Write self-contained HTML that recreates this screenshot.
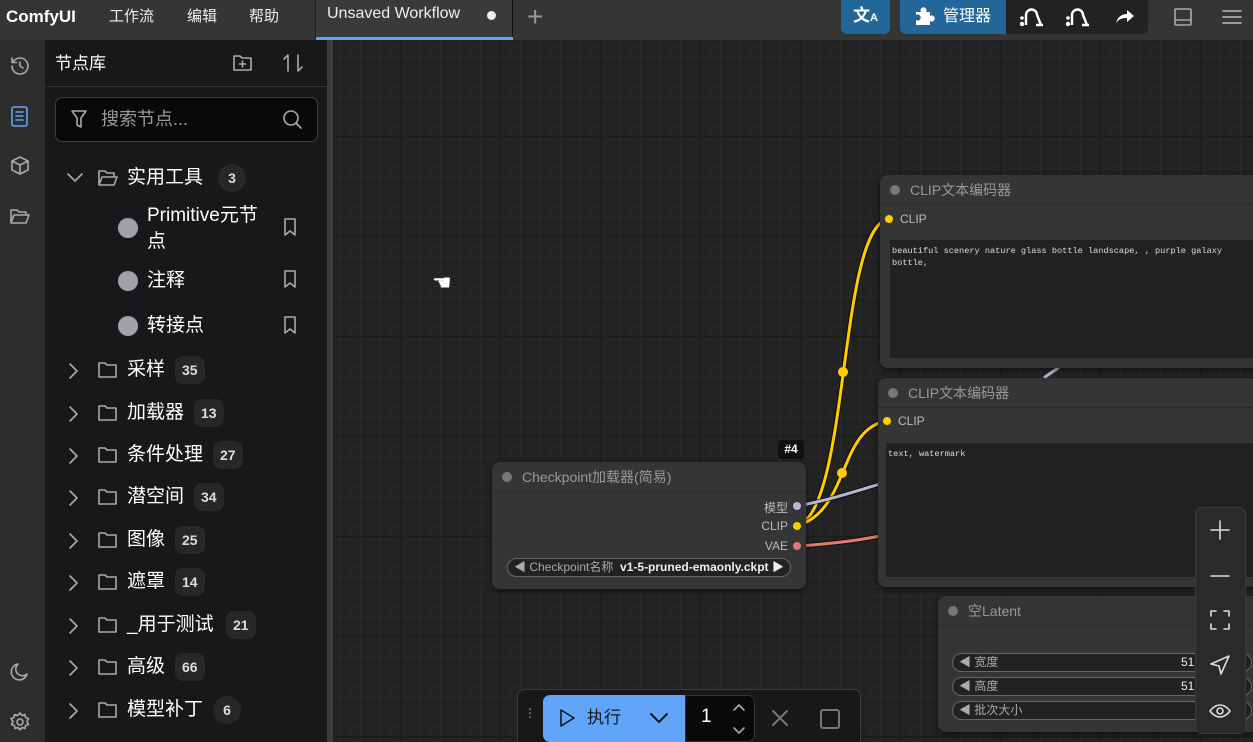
<!DOCTYPE html>
<html><head><meta charset="utf-8"><style>
*{box-sizing:border-box;margin:0;padding:0}
html,body{width:1253px;height:742px;overflow:hidden}
body{background:#222;font-family:"Liberation Sans","Noto Sans CJK SC",sans-serif;position:relative;color:#ddd}
.abs{position:absolute}
#top{left:0;top:0;width:1253px;height:40px;background:#353535}
#canvas{left:333px;top:40px;width:920px;height:702px;background-color:#222;
background-image:linear-gradient(#1b1b1b 1px,transparent 1px),linear-gradient(90deg,#1b1b1b 1px,transparent 1px),linear-gradient(#282828 1px,transparent 1px),linear-gradient(90deg,#282828 1px,transparent 1px);
background-size:100px 100px,100px 100px,10px 10px,10px 10px;background-position:-33px -4px}
#rail{left:0;top:40px;width:45px;height:702px;background:#2d2d2d}
#side{left:45px;top:40px;width:282px;height:702px;background:#18181b}
#gap{left:327px;top:40px;width:6px;height:702px;background:#3a3a3a}
.menu{top:7px;font-size:15px;color:#eee;line-height:20px}
.badge{position:absolute;top:0;height:28px;min-width:28px;padding:0 7px;border-radius:8px;background:#27272a;color:#ddd;font-size:14px;font-weight:bold;line-height:28px;text-align:center}
.node{position:absolute;background:#353535;border-radius:8px;box-shadow:0 2px 6px #0008}
.nt{height:30px;border-bottom:1px solid #2b2b2b;font-size:14px;color:#999;line-height:30px;padding-left:30px;position:relative}
.nt:before{content:"";position:absolute;left:10px;top:10px;width:10px;height:10px;border-radius:50%;background:#777}
.ta{position:absolute;background:#222;font-family:"Liberation Mono",monospace;font-size:8.6px;color:#ddd;padding:5px 2px;line-height:12px;white-space:nowrap;overflow:hidden}
.w{position:absolute;height:19px;border:1px solid #666;border-radius:10px;background:#222;font-size:12px;color:#aaa;line-height:17px;padding-left:6px}
.ic{position:absolute;stroke:#aaa;fill:none;stroke-width:1.6;stroke-linecap:round;stroke-linejoin:round}
.tx{position:absolute;font-size:19px;color:#fff;line-height:24px}
</style></head><body>
<div id="canvas" class="abs"></div>
<div id="top" class="abs"></div>
<div class="abs" style="left:6px;top:7px;font-size:17px;font-weight:bold;color:#fff">ComfyUI</div>
<div class="abs menu" style="left:109px">工作流</div>
<div class="abs menu" style="left:187px">编辑</div>
<div class="abs menu" style="left:249px">帮助</div>
<div class="abs" style="left:315px;top:0;width:1px;height:40px;background:#222"></div>
<div class="abs" style="left:316px;top:0;width:197px;height:40px;background:#3a3a3a;border-right:1px solid #111"></div>
<div class="abs" style="left:316px;top:37px;width:197px;height:3px;background:#60a5fa"></div>
<div class="abs" style="left:327px;top:5px;font-size:16px;color:#eee">Unsaved Workflow</div>
<div class="abs" style="left:487px;top:11px;width:9px;height:9px;border-radius:50%;background:#eee"></div>
<div class="abs" style="left:527px;top:1px;font-size:28px;color:#999;font-weight:300">+</div>
<div class="abs" style="left:841px;top:0;width:49px;height:34px;background:#236698;border-radius:0 0 6px 6px;color:#fff;font-size:17px;font-weight:bold;text-align:center;line-height:32px">文<span style="font-size:11px">A</span></div>
<div class="abs" style="left:900px;top:0;width:248px;height:34px;background:#222;border-radius:0 0 6px 6px"></div>
<div class="abs" style="left:900px;top:0;width:106px;height:34px;background:#236698;border-radius:0 0 0 6px"></div>
<svg class="abs" style="left:913px;top:6px" width="22" height="20" viewBox="0 0 22 20"><path d="M3 6h5a3 3 0 1 1 5 0h4v4a3 3 0 1 1 0 5v4H3v-5a3 3 0 1 0 0-5z" fill="#fff"/></svg>
<div class="abs" style="left:943px;top:6px;font-size:16px;color:#fff;line-height:22px">管理器</div>
<svg class="abs" style="left:1017px;top:4px" width="28" height="24" viewBox="0 0 28 24"><path d="M9 21V11a5.5 5.5 0 0 1 11 0l4 10M19 21h7" stroke="#fff" stroke-width="2.4" fill="none"/><circle cx="5" cy="20" r="2.2" fill="#fff"/><circle cx="5" cy="14" r="1.8" fill="#fff"/></svg>
<svg class="abs" style="left:1063px;top:4px" width="28" height="24" viewBox="0 0 28 24"><path d="M9 21V11a5.5 5.5 0 0 1 11 0l4 10M19 21h7" stroke="#fff" stroke-width="2.4" fill="none"/><circle cx="5" cy="20" r="2.2" fill="#fff"/><circle cx="5" cy="14" r="1.8" fill="#fff"/></svg>
<svg class="abs" style="left:1114px;top:7px" width="22" height="18" viewBox="0 0 22 18"><path d="M2 16C4 9 9 7 13 7V3l7 6-7 6v-4C8 11 5 12 2 16z" fill="#fff"/></svg>
<svg class="ic" style="left:1172px;top:6px;stroke:#aaa" width="22" height="22"><rect x="3" y="3" width="16" height="16" rx="1"/><path d="M3 14h16"/></svg>
<svg class="ic" style="left:1221px;top:8px;stroke:#bbb" width="22" height="18"><path d="M2 3h18M2 9h18M2 15h18"/></svg>

<div id="rail" class="abs"></div>
<svg class="ic" style="left:8px;top:54px" width="24" height="24"><path d="M4 12a8 8 0 1 0 2.5-5.8L4 8.5M4 4v4.5h4.5M12 8v4l3 2"/></svg>
<svg class="ic" style="left:9px;top:105px;stroke:#60a5fa" width="22" height="24"><rect x="3" y="2" width="15" height="19" rx="2"/><path d="M7 7h7M7 11h7M7 15h7"/></svg>
<svg class="ic" style="left:8px;top:154px" width="24" height="24"><path d="M12 3l8 4v9l-8 4-8-4V7zM4 7l8 4 8-4M12 11v9"/></svg>
<svg class="ic" style="left:8px;top:205px" width="24" height="22"><path d="M3 18V5h6l2 2h7v3M3 18l3-8h15l-3 8z"/></svg>
<svg class="ic" style="left:8px;top:660px" width="24" height="24"><path d="M19 14A8 8 0 1 1 10 4a6 6 0 0 0 9 10z"/></svg>
<svg class="ic" style="left:8px;top:710px" width="24" height="24"><circle cx="12" cy="12" r="3"/><path d="M12 3l2 2.5 3-1 .5 3 3 1-1.5 3 1.5 3-3 1-.5 3-3-1-2 2.5-2-2.5-3 1-.5-3-3-1 1.5-3L3 8.5l3-1 .5-3 3 1z"/></svg>

<div id="side" class="abs">
<div class="abs" style="left:10px;top:13px;font-size:17px;color:#fff;line-height:22px">节点库</div>
<svg class="ic" style="left:186px;top:12px" width="24" height="22"><path d="M3 18V4h6l2 2h9v12zM11.5 9v6M8.5 12h6"/></svg>
<svg class="ic" style="left:236px;top:11px" width="24" height="24"><path d="M7 20V4L3 8M17 4v16l4-4"/></svg>
<div class="abs" style="left:0;top:46px;width:282px;height:1px;background:#333"></div>
<div class="abs" style="left:10px;top:57px;width:263px;height:45px;border:1px solid #3f3f46;border-radius:7px;background:#09090b"></div>
<svg class="ic" style="left:24px;top:68px" width="22" height="24"><path d="M3 3h14l-5 7v9l-4-2v-7z"/></svg>
<div class="abs" style="left:56px;top:67px;font-size:18px;color:#999;line-height:24px">搜索节点...</div>
<svg class="ic" style="left:236px;top:68px" width="24" height="24"><circle cx="10" cy="10" r="7"/><path d="M15 15l5 5"/></svg>
</div>

<div class="abs" style="left:45px;top:0;width:282px;height:742px">
<svg class="ic" style="left:20px;top:170px" width="20" height="16"><path d="M3 4l7 7 7-7"/></svg>
<svg class="ic" style="left:51px;top:167px" width="24" height="22"><path d="M3 18V4h6l2 2h7v3M3 18l3-8h15l-3 8z"/></svg>
<div class="tx" style="left:82px;top:166px">实用工具</div><span class="badge" style="left:173px;top:164px;border-radius:14px">3</span>
<div class="abs" style="left:73px;top:218px;width:20px;height:20px;border-radius:50%;background:#a1a1aa"></div>
<div class="tx" style="left:102px;top:203px;line-height:26px;width:125px">Primitive元节<br>点</div>
<svg class="ic" style="left:237px;top:217px" width="16" height="20"><path d="M3 2h10v16l-5-4-5 4z"/></svg>
<div class="abs" style="left:73px;top:271px;width:20px;height:20px;border-radius:50%;background:#a1a1aa"></div>
<div class="tx" style="left:102px;top:269px">注释</div>
<svg class="ic" style="left:237px;top:269px" width="16" height="20"><path d="M3 2h10v16l-5-4-5 4z"/></svg>
<div class="abs" style="left:73px;top:316px;width:20px;height:20px;border-radius:50%;background:#a1a1aa"></div>
<div class="tx" style="left:102px;top:314px">转接点</div>
<svg class="ic" style="left:237px;top:315px" width="16" height="20"><path d="M3 2h10v16l-5-4-5 4z"/></svg>
</div>

<div id="tree" class="abs" style="left:45px;top:0;width:282px;height:742px"></div>
<div id="gap" class="abs"></div>

<svg class="abs" style="left:0;top:0" width="1253" height="742">
<g fill="none" stroke-linecap="round">
<path d="M797 526 C 850 510, 838 230, 888 219" stroke="#000" stroke-width="5" opacity=".6"/>
<path d="M797 526 C 850 510, 838 230, 888 219" stroke="#fc0" stroke-width="3"/>
<path d="M797 526 C 850 510, 838 430, 886 421" stroke="#000" stroke-width="5" opacity=".6"/>
<path d="M797 526 C 850 510, 838 430, 886 421" stroke="#fc0" stroke-width="3"/>
<path d="M797 506 C 830 500, 860 490, 880 484" stroke="#000" stroke-width="5" opacity=".6"/>
<path d="M797 506 C 830 500, 860 490, 880 484" stroke="#b8b6d8" stroke-width="3"/>
<path d="M1045 377 L1058 368" stroke="#b8b6d8" stroke-width="3"/>
<path d="M797 546 C 830 544, 860 540, 880 536" stroke="#000" stroke-width="5" opacity=".6"/>
<path d="M797 546 C 830 544, 860 540, 880 536" stroke="#e07a6a" stroke-width="3"/>
</g>
<circle cx="843" cy="372" r="5" fill="#fc0"/><circle cx="842" cy="473" r="5" fill="#fc0"/>
<text x="432" y="290" font-size="22" fill="#fff">☚</text>
</svg>

<div class="node" style="left:880px;top:175px;width:380px;height:193px"><div class="nt">CLIP文本编码器</div>
<div class="abs" style="left:5px;top:40px;width:8px;height:8px;border-radius:50%;background:#fc0"></div>
<div class="abs" style="left:20px;top:37px;font-size:12px;color:#bbb">CLIP</div>
<div class="ta" style="left:10px;top:65px;width:370px;height:118px">beautiful scenery nature glass bottle landscape, , purple galaxy<br>bottle,</div></div>
<div class="node" style="left:878px;top:378px;width:380px;height:209px"><div class="nt">CLIP文本编码器</div>
<div class="abs" style="left:5px;top:39px;width:8px;height:8px;border-radius:50%;background:#fc0"></div>
<div class="abs" style="left:20px;top:36px;font-size:12px;color:#bbb">CLIP</div>
<div class="ta" style="left:8px;top:65px;width:372px;height:134px">text, watermark</div></div>

<div class="abs" style="left:778px;top:440px;width:26px;height:19px;background:#111;border-radius:4px;color:#fff;font-size:12px;font-weight:bold;text-align:center;line-height:19px">#4</div>
<div class="node" style="left:492px;top:462px;width:314px;height:127px"><div class="nt">Checkpoint加载器(简易)</div>
<div class="abs" style="right:18px;top:37px;font-size:12px;color:#bbb">模型</div>
<div class="abs" style="right:18px;top:57px;font-size:12px;color:#bbb">CLIP</div>
<div class="abs" style="right:18px;top:77px;font-size:12px;color:#bbb">VAE</div>
<div class="abs" style="left:301px;top:40px;width:8px;height:8px;border-radius:50%;background:#b8b6d8"></div>
<div class="abs" style="left:301px;top:60px;width:8px;height:8px;border-radius:50%;background:#fc0"></div>
<div class="abs" style="left:301px;top:80px;width:8px;height:8px;border-radius:50%;background:#e07a6a"></div>
<div class="w" style="left:15px;top:96px;width:284px">◀ Checkpoint名称 &nbsp;<b style="color:#eee">v1-5-pruned-emaonly.ckpt</b><span style="position:absolute;right:6px;color:#eee">▶</span></div></div>

<div class="node" style="left:938px;top:596px;width:320px;height:136px"><div class="nt">空Latent</div>
<div class="w" style="left:14px;top:57px;width:300px">◀ 宽度<span style="position:absolute;left:228px;color:#eee">512</span></div>
<div class="w" style="left:14px;top:81px;width:300px">◀ 高度<span style="position:absolute;left:228px;color:#eee">512</span></div>
<div class="w" style="left:14px;top:105px;width:300px">◀ 批次大小</div></div>

<div class="abs" style="left:1195px;top:507px;width:51px;height:227px;background:#2a2a2a;border:1px solid #3a3a3a;border-radius:7px"></div>
<svg class="ic" style="left:1208px;top:518px;stroke:#ddd" width="24" height="24"><path d="M12 3v18M3 12h18"/></svg>
<svg class="ic" style="left:1208px;top:564px;stroke:#ddd" width="24" height="24"><path d="M3 12h18"/></svg>
<svg class="ic" style="left:1208px;top:608px;stroke:#ddd" width="24" height="24"><path d="M3 8V3h5M16 3h5v5M21 16v5h-5M8 21H3v-5"/></svg>
<svg class="ic" style="left:1208px;top:653px;stroke:#ddd" width="24" height="24"><path d="M21 3L3 11l8 2 2 8z"/></svg>
<svg class="ic" style="left:1208px;top:699px;stroke:#ddd" width="24" height="24"><path d="M2 12s4-6 10-6 10 6 10 6-4 6-10 6S2 12 2 12z"/><circle cx="12" cy="12" r="3"/></svg>

<div class="abs" style="left:517px;top:689px;width:344px;height:60px;background:#18181b;border:1px solid #3a3a3a;border-radius:7px"></div>
<div class="abs" style="left:524px;top:711px;color:#aaa;font-size:12px;line-height:5px">⋮</div>
<div class="abs" style="left:543px;top:695px;width:142px;height:47px;background:#60a5fa;border-radius:7px 0 0 7px"></div>
<svg class="ic" style="left:557px;top:707px;stroke:#18181b" width="20" height="22"><path d="M4 3l13 8-13 8z"/></svg>
<div class="abs" style="left:587px;top:706px;font-size:17px;color:#18181b;line-height:24px">执行</div>
<svg class="ic" style="left:648px;top:708px;stroke:#18181b;stroke-width:2" width="22" height="20"><path d="M3 6l8 8 8-8"/></svg>
<div class="abs" style="left:685px;top:695px;width:70px;height:47px;background:#09090b;border:1px solid #333;border-radius:0 7px 7px 0"></div>
<div class="abs" style="left:701px;top:706px;font-size:19px;color:#fff">1</div>
<svg class="ic" style="left:730px;top:700px" width="18" height="38"><path d="M4 10l5-5 5 5M4 28l5 5 5-5"/></svg>
<svg class="ic" style="left:769px;top:707px;stroke:#777;stroke-width:2" width="22" height="22"><path d="M4 4l14 14M18 4L4 18"/></svg>
<svg class="ic" style="left:818px;top:707px;stroke:#777;stroke-width:2" width="24" height="24"><rect x="3" y="3" width="18" height="18" rx="2"/></svg>

<script>
var items=[["采样",35,370],["加载器",13,413],["条件处理",27,455],["潜空间",34,497],["图像",25,540],["遮罩",14,582],["_用于测试",21,625],["高级",66,667],["模型补丁",6,710]];
var h="";items.forEach(function(it){var y=it[2];var w=it[0].length*19;
h+='<svg class="ic" style="left:20px;top:'+(y-9)+'px" width="16" height="20"><path d="M5 3l7 7-7 7"/></svg>';
h+='<svg class="ic" style="left:51px;top:'+(y-11)+'px" width="24" height="22"><path d="M3 18V4h6l2 2h9v12z"/></svg>';
h+='<div class="tx" style="left:82px;top:'+(y-12)+'px">'+it[0]+'</div>';
var r=String(it[1]).length==1?'border-radius:14px;':'';
h+='<span class="badge" style="left:'+(82+w+(it[0][0]=="_"?-6:0)+10)+'px;top:'+(y-14)+'px;'+r+'">'+it[1]+'</span>';});
document.getElementById("tree").innerHTML=h;
</script>
</body></html>
